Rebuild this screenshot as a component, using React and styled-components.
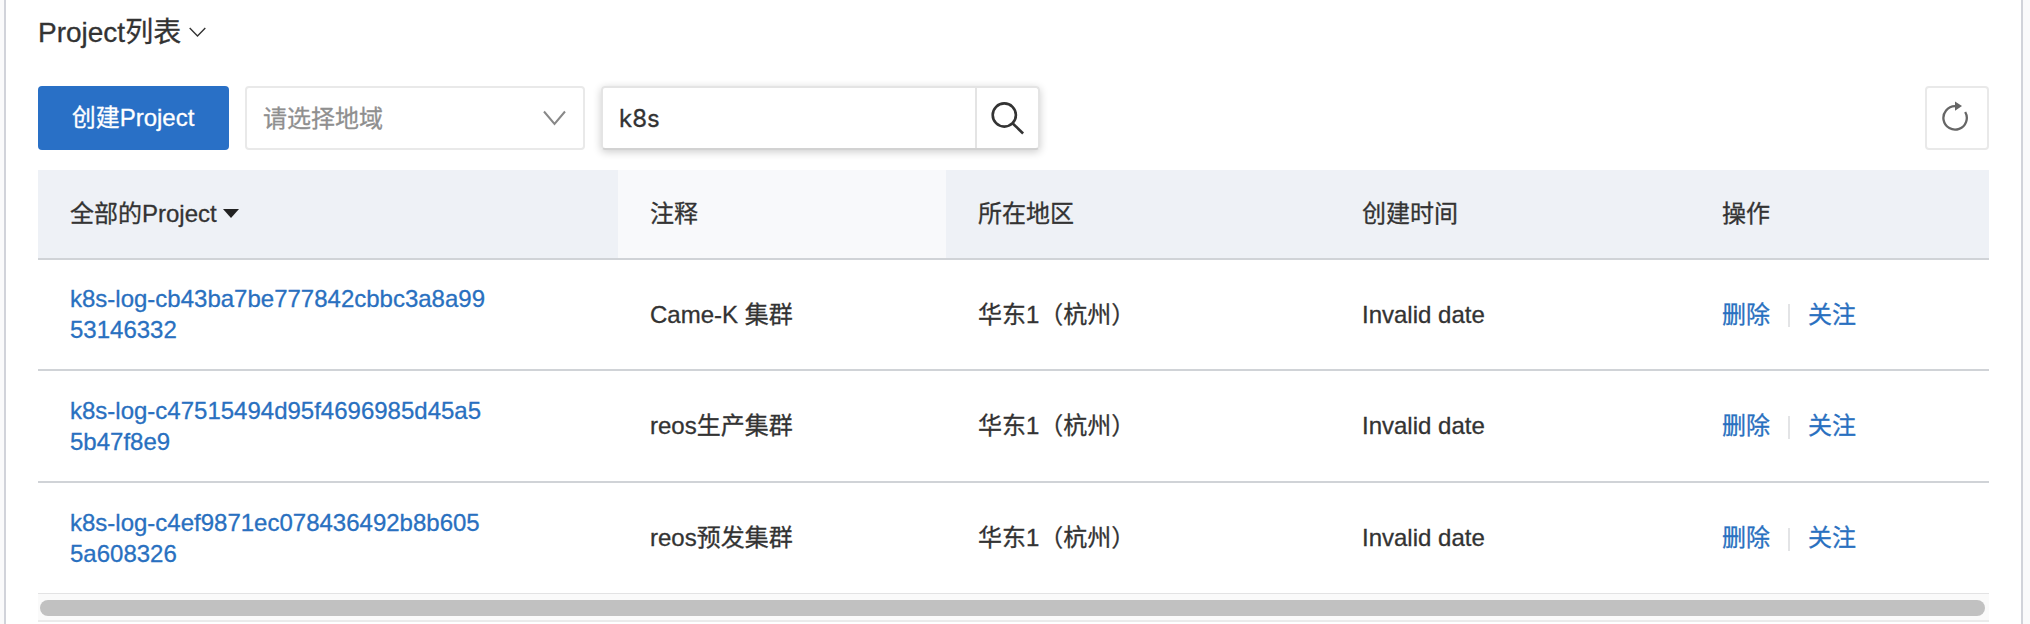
import React from "react";
import styled, { createGlobalStyle } from "styled-components";

const Global = createGlobalStyle`
  *, *::before, *::after { box-sizing: border-box; }
  body {
    margin: 0;
    background: #fafafb;
    color: #333;
    font: 24px/31px "Liberation Sans", "Noto Sans CJK SC", sans-serif;
    -webkit-text-stroke: 0.3px currentColor;
    overflow: hidden;
  }
  button, input { font: inherit; color: inherit; margin: 0; padding: 0; }
`;

const Panel = styled.main`
  width: 2019px;
  height: 624px;
  margin-left: 4px;
  padding: 14px 32px 0;
  background: #fff;
  border: solid #d1d3da;
  border-width: 0 2px;
  overflow: hidden;
`;

const Title = styled.h1`
  display: flex;
  align-items: center;
  gap: 8px;
  height: 36px;
  margin: 0 0 36px;
  font-size: 28px;
  font-weight: 400;
`;

const Toolbar = styled.div`
  display: flex;
  height: 64px;
  margin-bottom: 20px;
`;

const PrimaryButton = styled.button`
  width: 191px;
  margin-right: 16px;
  padding: 0 1px 1px 0;
  border: 0;
  border-radius: 4px;
  background: #2970c6;
  color: #fff;
`;

const Select = styled.div`
  display: flex;
  align-items: center;
  justify-content: space-between;
  width: 340px;
  margin-right: 16px;
  padding: 0 17px 0 16px;
  border: 2px solid #e9e9e9;
  border-radius: 4px;
  color: #8f8f8f;
`;

const SearchBox = styled.div`
  display: flex;
  width: 439px;
  border: 2px solid #e4e4e4;
  border-bottom-color: #d2d2d2;
  border-radius: 4px;
  box-shadow: 0 2px 8px rgba(0, 0, 0, 0.2);
`;

const SearchInput = styled.input`
  width: 374px;
  padding: 0 16px;
  border: 0;
  border-right: 2px solid #e4e4e4;
  background: transparent;
  outline: 0;
  font-family: Inter, sans-serif;
`;

const IconButton = styled.button`
  display: flex;
  flex: 1;
  align-items: center;
  justify-content: center;
  border: 0;
  background: transparent;
`;

const RefreshButton = styled.button`
  display: flex;
  align-items: center;
  justify-content: center;
  width: 64px;
  margin-left: auto;
  padding: 0 4px 4px 0;
  border: 2px solid #e9e9e9;
  border-radius: 4px;
  background: #fff;
`;

const Row = styled.div`
  display: grid;
  grid-template-columns: 580px 328px 384px 360px 1fr;
  height: ${(p) => p.$height}px;
  border-bottom: ${(p) => (p.$last ? "1px solid #e3e3e4" : "2px solid #d0d3d7")};
`;

const HeadRow = styled(Row)`
  background: #eef1f6;
`;

const Cell = styled.div`
  display: flex;
  align-items: center;
  padding: 0 32px 1px 32px;
  background: ${(p) => (p.$hover ? "#f8f9fb" : "transparent")};
`;

const HeadCell = styled(Cell)`
  gap: 6px;
  padding-bottom: 2px;
`;

const Link = styled.a`
  width: 420px;
  color: #2970c0;
  word-break: break-all;
`;

const Action = styled.a`
  color: #2970c0;
`;

const Divider = styled.span`
  width: 2px;
  height: 23px;
  margin: 3px 18px 0;
  background: #e3e4e6;
`;

const ScrollTrack = styled.div`
  height: 28px;
  padding: 6px 4px 0 2px;
  background: #fafafa;
  border-bottom: 2px solid #ebebeb;
`;

const ScrollThumb = styled.div`
  height: 16px;
  border-radius: 8px;
  background: #c1c1c1;
`;

const rows = [
  { name: "k8s-log-cb43ba7be777842cbbc3a8a9953146332", note: "Came-K 集群", height: 111 },
  { name: "k8s-log-c47515494d95f4696985d45a55b47f8e9", note: "reos生产集群", height: 112 },
  { name: "k8s-log-c4ef9871ec078436492b8b6055a608326", note: "reos预发集群", height: 111 },
];

export default function App() {
  return (
    <>
      <Global />
      <Panel>
        <Title>
          Project列表
          <svg width="17" height="11" viewBox="0 0 17 11" fill="none" stroke="#333" strokeWidth="1.4">
            <path d="M.7 1l7.8 8L16.3 1" />
          </svg>
        </Title>
        <Toolbar>
          <PrimaryButton>创建Project</PrimaryButton>
          <Select>
            请选择地域
            <svg width="23" height="16" viewBox="0 0 23 16" fill="none" stroke="#888" strokeWidth="2">
              <path d="M1 1.5l10.5 12.4L22 1.5" />
            </svg>
          </Select>
          <SearchBox>
            <SearchInput defaultValue="k8s" />
            <IconButton aria-label="搜索">
              <svg width="33" height="33" viewBox="0 0 33 33" fill="none" stroke="#333" strokeWidth="2.6">
                <circle cx="13.3" cy="13" r="11.6" />
                <path d="M21.5 21.2l10.6 10.3" />
              </svg>
            </IconButton>
          </SearchBox>
          <RefreshButton aria-label="刷新">
            <svg width="28" height="30" viewBox="0 0 28 30" fill="none" stroke="#666" strokeWidth="2.3">
              <path d="M14 5.2A11.7 11.7 0 1 0 24.2 11" />
              <path d="M14 .4l7 4.7-7 4.6z" fill="#666" stroke="none" />
            </svg>
          </RefreshButton>
        </Toolbar>
        <HeadRow $height={90}>
          <HeadCell>
            全部的Project
            <svg width="16" height="9" viewBox="0 0 16 9" fill="#222">
              <path d="M0 0h16L8 9z" />
            </svg>
          </HeadCell>
          <HeadCell $hover>注释</HeadCell>
          <HeadCell>所在地区</HeadCell>
          <HeadCell>创建时间</HeadCell>
          <HeadCell>操作</HeadCell>
        </HeadRow>
        {rows.map((r, i) => (
          <Row key={r.name} $height={r.height} $last={i === rows.length - 1}>
            <Cell><Link>{r.name}</Link></Cell>
            <Cell>{r.note}</Cell>
            <Cell>华东1（杭州）</Cell>
            <Cell>Invalid date</Cell>
            <Cell>
              <Action>删除</Action>
              <Divider />
              <Action>关注</Action>
            </Cell>
          </Row>
        ))}
        <ScrollTrack><ScrollThumb /></ScrollTrack>
      </Panel>
    </>
  );
}
